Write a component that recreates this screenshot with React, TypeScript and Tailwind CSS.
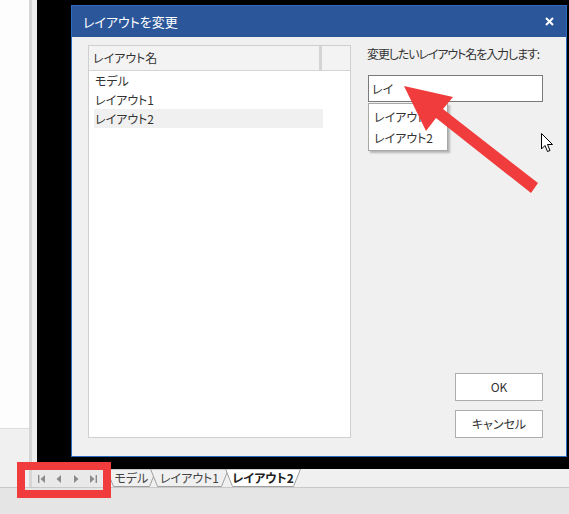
import React from 'react'

const jp = "font-[Noto_Sans_CJK_JP,sans-serif] [font-feature-settings:'palt']"

function Tab({ label, active, width, className }: { label: string; active?: boolean; width: number; className?: string }) {
  return (
    <div className={`relative h-[18px] flex items-center justify-center ${className ?? ''}`} style={{ width }}>
      <svg className="absolute inset-0" width={width} height={18} viewBox={`0 0 ${width} 18`}>
        <polygon
          points={`0.5,0 ${width - 0.5},0 ${width - 7.5},17.5 7.5,17.5`}
          fill={active ? '#ffffff' : '#f0f0f0'}
          stroke="#a0a0a0"
          strokeWidth="1"
        />
      </svg>
      <span className={`relative text-[12px] leading-none ${active ? 'font-bold text-[#222]' : 'text-[#444]'}`}>{label}</span>
    </div>
  )
}

function NavButtons() {
  return (
    <div className="flex items-center gap-[9px] pl-[6px] text-[#8a8a8a]">
      <svg width="8" height="8" viewBox="0 0 8 8"><rect x="0" y="0" width="1.4" height="8" fill="currentColor" /><polygon points="7,0 2.5,4 7,8" fill="currentColor" /></svg>
      <svg width="8" height="8" viewBox="0 0 8 8"><polygon points="6,0 1.5,4 6,8" fill="currentColor" /></svg>
      <svg width="8" height="8" viewBox="0 0 8 8"><polygon points="2,0 6.5,4 2,8" fill="currentColor" /></svg>
      <svg width="8" height="8" viewBox="0 0 8 8"><polygon points="1,0 5.5,4 1,8" fill="currentColor" /><rect x="6.6" y="0" width="1.4" height="8" fill="currentColor" /></svg>
    </div>
  )
}

export default function App() {
  const rows = ['モデル', 'レイアウト1', 'レイアウト2']

  return (
    <div className={`relative w-[569px] h-[514px] overflow-hidden flex flex-col bg-[#f0f0f0] text-[#333] ${jp}`}>
      {/* main area */}
      <div className="flex h-[469px]">
        <div className="w-[29px] flex flex-col">
          <div className="h-[429px] bg-[#fdfdfd] border-b border-[#dcdcdc]" />
          <div className="flex-1 bg-[#f0f0f0]" />
        </div>
        <div className="w-[3px] bg-[#d6d6d6]" />
        <div className="w-[5px] bg-[#eeeeee]" />
        <div className="flex-1 bg-black pt-[5px] pl-[34px] pr-[2px]">
          {/* dialog */}
          <div className="w-[496px] h-[452px] border border-[#2b6bc4] bg-[#f0f0f0] flex flex-col">
            <div className="h-[31px] bg-[#2b579a] flex items-center justify-between pl-[11px] pr-[12px] text-white">
              <span className="text-[13px] leading-none">レイアウトを変更</span>
              <svg width="9" height="9" viewBox="0 0 9 9">
                <path d="M1 1 L8 8 M8 1 L1 8" stroke="#ffffff" strokeWidth="2" />
              </svg>
            </div>
            <div className="flex-1 flex pl-[16px] pt-[8px] pb-[18px]">
              {/* list */}
              <div className="w-[263px] shrink-0 border border-[#cfcfcf] bg-white flex flex-col">
                <div className="h-[25px] flex border-b border-[#d5d5d5] bg-[#f3f3f3]">
                  <div className="w-[233px] flex items-center pl-[4px] text-[12px] text-[#333] border-r-[3px] border-[#d4d4d4]">
                    レイアウト名
                  </div>
                  <div className="flex-1" />
                </div>
                <div className="pl-[5px]">
                  {rows.map((r, i) => (
                    <div
                      key={r}
                      className={`h-[19px] w-[229px] flex items-center pl-[1px] text-[12px] text-[#333] ${i === 2 ? 'bg-[#f0f0f0]' : ''}`}
                    >
                      {r}
                    </div>
                  ))}
                </div>
              </div>
              {/* right column */}
              <div className="ml-[16px] w-[176px] shrink-0 flex flex-col">
                <div className="text-[12px] leading-none pt-[3px] text-[#333] whitespace-nowrap tracking-[-1.1px]">変更したいレイアウト名を入力します:</div>
                <div className="relative mt-[15px] ml-[1px] w-[175px]">
                  <div className="h-[27px] border border-[#7a7a7a] bg-white flex items-center pl-[3px] text-[12px] text-[#333]">
                    レイ
                  </div>
                  <div className="absolute left-0 top-[28px] w-[80px] h-[48px] border border-[#a8a8a8] bg-white shadow-[2px_2px_2px_rgba(0,0,0,0.25)] flex flex-col pl-[5px] pt-[2px] text-[12px] text-[#333]">
                    <div className="h-[21px] flex items-center">レイアウト1</div>
                    <div className="h-[21px] flex items-center">レイアウト2</div>
                  </div>
                </div>
                <div className="mt-auto flex flex-col items-end gap-[9px]">
                  <button className="w-[88px] h-[28px] border border-[#adadad] bg-white text-[12px] text-[#333]">OK</button>
                  <button className="w-[88px] h-[28px] border border-[#adadad] bg-white text-[12px] text-[#333]">キャンセル</button>
                </div>
              </div>
            </div>
          </div>
        </div>
      </div>

      {/* tab strip */}
      <div className="flex h-[18px] bg-[#f0f0f0]">
        <div className="w-[29px]" />
        <div className="w-[3px] bg-[#d6d6d6]" />
        <div className="w-[72px] border-t border-[#555] bg-[#e9e9e9] flex items-center">
          <NavButtons />
        </div>
        <div className="flex items-start pl-[2px]">
          <Tab label="モデル" width={51} />
          <Tab label="レイアウト1" width={79} className="-ml-[7px]" />
          <Tab label="レイアウト2" width={76} active className="-ml-[4px]" />
        </div>
      </div>

      {/* status area */}
      <div className="flex-1 bg-[#e5e5e5] border-t border-[#c9c9c9]" />

      {/* annotation: red box */}
      <div className="absolute left-[17px] top-[462px] w-[94px] h-[36px] border-[8px] border-[#f03c3c]" />

      {/* annotation: arrow */}
      <svg className="absolute left-0 top-0" width="569" height="514" viewBox="0 0 569 514">
        <polygon
          points="404,86 453,97 443,109 538,183 531,193 436,118 426,131"
          fill="#f03c3c"
        />
      </svg>

      {/* mouse cursor */}
      <svg className="absolute left-[541px] top-[133px]" width="13" height="20" viewBox="0 0 13 20">
        <path d="M0.5 0.5 L0.5 16 L4 12.5 L6.5 18.5 L9 17.5 L6.5 11.5 L11.5 11.5 Z" fill="#ffffff" stroke="#000000" strokeWidth="1" />
      </svg>
    </div>
  )
}
